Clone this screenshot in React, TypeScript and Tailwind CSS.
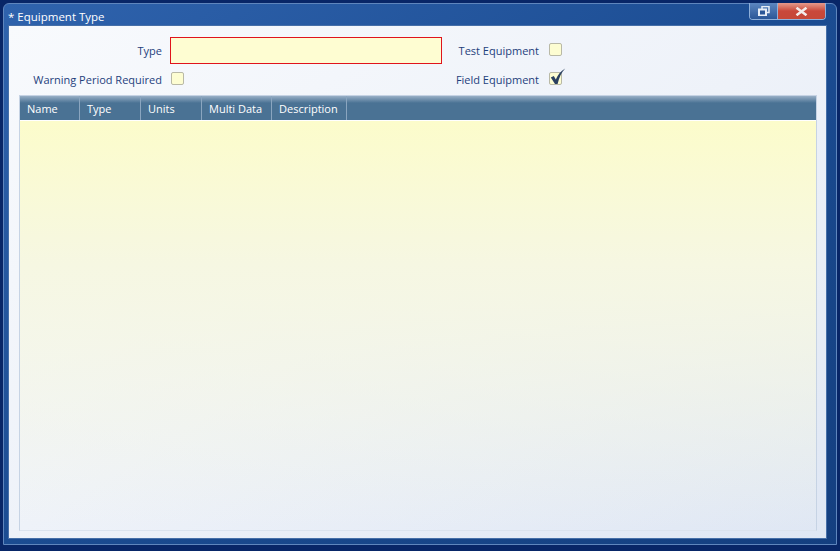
import React from 'react';

const font = { fontFamily: '"Segoe UI", "Open Sans", "Noto Sans", sans-serif' };

const CheckBox = ({ checked = false }: { checked?: boolean }) => (
  <div className="relative w-[13px] h-[13px] rounded-[2px] border border-[#b9b9a6] bg-[#fdfdd2]">
    {checked && (
      <svg className="absolute left-[0px] top-[-5px]" width="16" height="17" viewBox="0 0 16 17">
        <path d="M0.8 9.5 L3.8 8 L5.8 11.6 C7.8 7 10.5 3.2 15.2 0.6 C11.6 4.2 9.2 9.5 7.6 16 L5 16 Z" fill="#2a4060" />
      </svg>
    )}
  </div>
);

const columns = [
  { name: 'Name', w: 'w-[60px]' },
  { name: 'Type', w: 'w-[61px]' },
  { name: 'Units', w: 'w-[61px]' },
  { name: 'Multi Data', w: 'w-[70px]' },
  { name: 'Description', w: 'w-[75px]' },
];

export default function App() {
  return (
    <div className="w-[840px] h-[551px] overflow-hidden bg-[#082667] text-[11px]" style={font}>
      {/* Window frame */}
      <div className="ml-[3px] mt-[3px] w-[834px] h-[542px] rounded-t-[6px] border border-[#5f86bd] bg-gradient-to-br from-[#2f63ad] via-[#1b4c92] to-[#143f80] flex flex-col">
        {/* Title bar */}
        <div className="h-[21px] flex items-start relative">
          <div className="pl-[4px] pt-[5px] text-white text-[11.5px] leading-[16px]">* Equipment Type</div>
          <div className="absolute right-[10px] top-[-1px] flex h-[17px] rounded-b-[4px] border border-t-0 border-[#8fb0da] overflow-hidden">
            <div className="w-[28px] h-full bg-gradient-to-b from-[#5c86c0] to-[#2b5797] border-r border-[#8fb0da] flex items-center justify-center">
              <svg width="12" height="10" viewBox="0 0 12 10">
                <rect x="4" y="0.5" width="7" height="6" fill="none" stroke="#e8eef6" strokeWidth="1.5" />
                <rect x="1" y="3.5" width="7" height="6" fill="#2b5797" stroke="#e8eef6" strokeWidth="2" />
              </svg>
            </div>
            <div className="w-[47px] h-full bg-gradient-to-b from-[#e49a8c] via-[#c9483a] to-[#c64838] flex items-center justify-center">
              <svg width="13" height="9" viewBox="0 0 13 9">
                <path d="M1.5 0.8 L11.5 8.2 M11.5 0.8 L1.5 8.2" stroke="#f4ecea" strokeWidth="2.6" />
              </svg>
            </div>
          </div>
        </div>

        {/* Client area */}
        <div className="ml-[4px] w-[819px] h-[514px] border border-[#466fa8] bg-gradient-to-br from-[#f8fafd] via-[#eef2f9] to-[#dfe7f4] flex flex-col text-[#1e3f7c]">
          {/* Form rows */}
          <div className="flex pt-[11px]">
            <div className="flex flex-col">
              <div className="flex items-center h-[27px]">
                <div className="w-[153px] text-right pt-[2px]">Type</div>
                <div className="ml-[8px] w-[272px] h-[27px] border border-[#e0141c] bg-[#fefdd2]" />
              </div>
              <div className="flex items-center h-[22px] mt-[4px]">
                <div className="w-[153px] text-right pt-[2px]">Warning Period Required</div>
                <div className="ml-[9px] -mt-[2px]"><CheckBox /></div>
              </div>
            </div>
            <div className="flex flex-col ml-[8px]">
              <div className="flex items-center h-[27px]">
                <div className="text-right w-[89px] pt-[2px]">Test Equipment</div>
                <div className="ml-[10px] -mt-[2px]"><CheckBox /></div>
              </div>
              <div className="flex items-center h-[22px] mt-[4px]">
                <div className="text-right w-[89px] pt-[2px]">Field Equipment</div>
                <div className="ml-[10px] -mt-[2px]"><CheckBox checked /></div>
              </div>
            </div>
          </div>

          {/* Grid */}
          <div className="ml-[10px] mt-[5px] w-[798px] h-[436px] border border-[#c6d3e4] border-b-[#dbe3ee] flex flex-col">
            <div className="h-[25px] flex border-b border-white bg-gradient-to-b from-[#98afc6] via-[#4a7294] to-[#4a7294] bg-[length:100%_14px] bg-no-repeat bg-[#4a7294]">
              {columns.map((c) => (
                <div key={c.name} className={`${c.w} h-full flex items-center pl-[7px] text-white border-r border-[#8aa5bf] leading-none`}>
                  {c.name}
                </div>
              ))}
            </div>
            <div className="flex-1 bg-gradient-to-b from-[#fcfccb] via-[#f6f7e2] via-35% to-transparent" />
          </div>
        </div>
      </div>
    </div>
  );
}
